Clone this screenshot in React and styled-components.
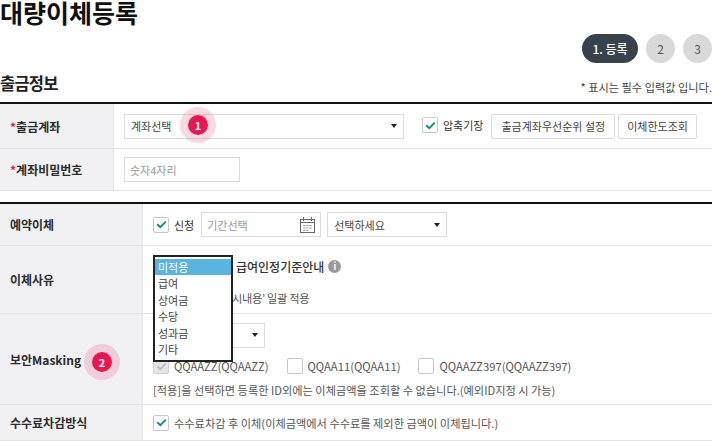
import React from "react";
import styled, { createGlobalStyle } from "styled-components";

const Global = createGlobalStyle`
  html, body { margin: 0; padding: 0; background: #fff; overflow: hidden; }
  body { font-family: "Noto Sans CJK KR", "Noto Sans", sans-serif; color: #333; font-size: 12px; }
  * { box-sizing: border-box; }
`;

const Page = styled.div`
  width: 712px;
  height: 441px;
  overflow: hidden;
  display: flex;
  flex-direction: column;
`;
const Title = styled.h1`
  margin: 0;
  height: 34px;
  font-size: 25px;
  line-height: 25px;
  font-weight: 700;
  color: #111;
`;
const Stepper = styled.div`
  height: 29px;
  display: flex;
  justify-content: flex-end;
  gap: 8px;
`;
const ActiveStep = styled.div`
  width: 56px;
  height: 29px;
  border-radius: 15px;
  background: #38424c;
  color: #fff;
  font-size: 12px;
  font-weight: 500;
  display: flex;
  align-items: center;
  justify-content: center;
`;
const Step = styled.div`
  width: 29px;
  height: 29px;
  border-radius: 50%;
  background: #d9d9d9;
  color: #555;
  font-size: 12px;
  display: flex;
  align-items: center;
  justify-content: center;
`;
const SectionHead = styled.div`
  height: 39px;
  display: flex;
  align-items: flex-start;
  justify-content: space-between;
  padding-top: 9px;
`;
const SectionTitle = styled.h2`
  margin: 0;
  font-size: 16.5px;
  line-height: 22px;
  font-weight: 700;
  color: #222;
  letter-spacing: -0.8px;
`;
const Note = styled.div`
  font-size: 11.2px;
  line-height: 22px;
  color: #444;
  margin-top: 4px;
`;
const Table = styled.div`
  border-top: 2px solid #111;
  margin-bottom: ${p => p.$mb || 0}px;
`;
const Row = styled.div`
  display: grid;
  grid-template-columns: ${p => p.$label}px 1fr;
  height: ${p => p.$h}px;
  border-bottom: 1px solid #e4e4e4;
`;
const Label = styled.div`
  background: #f1f1f4;
  border-right: 1px solid #e4e4e4;
  display: flex;
  align-items: center;
  padding-left: 10px;
  font-size: 12px;
  font-weight: 700;
  color: #2c2c2c;
  position: relative;
`;
const Star = styled.span`
  color: #e5174f;
`;
const Cell = styled.div`
  display: flex;
  align-items: center;
  padding-left: 10px;
  gap: ${p => p.$gap || 0}px;
  position: relative;
`;
const Stack = styled.div`
  display: flex;
  flex-direction: column;
  padding-left: 10px;
`;
const SelectBox = styled.div`
  width: ${p => p.$w}px;
  height: 25px;
  margin-left: ${p => p.$ml || 0}px;
  border: 1px solid #dcdcdc;
  display: flex;
  align-items: center;
  justify-content: space-between;
  padding: 0 6px;
  font-size: 11px;
  color: #444;
  background: #fff;
  flex: none;
`;
const Caret = styled.span`
  width: 0;
  height: 0;
  margin-left: auto;
  border-left: 3.5px solid transparent;
  border-right: 3.5px solid transparent;
  border-top: 4px solid #222;
`;
const TextBox = styled.div`
  width: ${p => p.$w}px;
  height: 25px;
  border: 1px solid #dcdcdc;
  display: flex;
  align-items: center;
  justify-content: space-between;
  padding: 0 4px 0 5px;
  font-size: 11px;
  color: #999;
  flex: none;
`;
const Box = styled.span`
  width: 16px;
  height: 16px;
  flex: none;
  margin-left: ${p => p.$ml || 0}px;
  margin-bottom: ${p => p.$up || 0}px;
  border: 1px solid ${p => (p.$muted ? "#d2d2d2" : "#c8c8c8")};
  border-radius: 2px;
  background: ${p => (p.$muted ? "#e6e6e6" : "#fff")};
  display: flex;
  align-items: center;
  justify-content: center;
`;
const CheckLabel = styled.span`
  font-size: 11px;
  color: #333;
  white-space: nowrap;
  margin: 0 ${p => p.$mr}px ${p => p.$up || 0}px 5px;
`;
const Btn = styled.div`
  height: 25px;
  margin-left: ${p => p.$ml || 0}px;
  padding: 0 ${p => p.$px || 8}px;
  border: 1px solid #dcdcdc;
  border-radius: 2px;
  font-size: 11px;
  color: #444;
  display: flex;
  align-items: center;
  white-space: nowrap;
  flex: none;
`;
const Badge = styled.span`
  position: absolute;
  left: ${p => p.$x}px;
  top: ${p => p.$y}px;
  width: 36px;
  height: 36px;
  border-radius: 50%;
  background: rgba(232, 30, 90, 0.17);
  display: flex;
  align-items: center;
  justify-content: center;
  &::after {
    content: "${p => p.$n}";
    width: 20px;
    height: 20px;
    border-radius: 50%;
    background: #ea1652;
    color: #fff;
    font-size: 11px;
    font-weight: 700;
    display: flex;
    align-items: center;
    justify-content: center;
  }
`;
const ListBox = styled.div`
  position: absolute;
  left: 153px;
  top: 255px;
  width: 80px;
  height: 107px;
  background: #fff;
  border: 2px solid #222;
  padding-top: 2px;
  z-index: 3;
`;
const ListItem = styled.div`
  height: ${p => (p.$on ? 16 : 16.6)}px;
  line-height: ${p => (p.$on ? 16 : 16.6)}px;
  padding-left: 3px;
  font-size: 11px;
  color: ${p => (p.$on ? "#fff" : "#444")};
  background: ${p => (p.$on ? "#5ab4e2" : "transparent")};
`;
const InfoIcon = styled.span`
  width: 13px;
  height: 13px;
  border-radius: 50%;
  background: #999;
  color: #fff;
  font-size: 9px;
  font-weight: 700;
  display: inline-flex;
  align-items: center;
  justify-content: center;
  margin-left: 4px;
`;
const Strong = styled.span`
  font-size: 12px;
  font-weight: 500;
  color: #333;
  white-space: nowrap;
`;
const Small = styled.div`
  font-size: ${p => p.$size || 11.2}px;
  letter-spacing: ${p => p.$ls || 0}px;
  color: #555;
  line-height: 16px;
  white-space: nowrap;
`;
const Line = styled.div`
  display: flex;
  align-items: center;
  height: ${p => p.$h}px;
  gap: ${p => p.$gap || 0}px;
  padding-left: ${p => p.$pl || 0}px;
  padding-top: ${p => p.$pt || 0}px;
`;
const Pair = styled.span`
  display: flex;
  align-items: center;
  gap: 5px;
`;

const Tick = ({ color = "#0f8f7f" }) => (
  <svg width="11" height="9" viewBox="0 0 11 9" fill="none">
    <path d="M1.2 4.2 L4.3 7.2 L9.8 1.6" stroke={color} strokeWidth="1.9" />
  </svg>
);
const Calendar = () => (
  <svg width="17" height="16" viewBox="0 0 17 16" fill="none" stroke="#666">
    <rect x="1.5" y="2.5" width="14" height="13" />
    <path d="M1.5 5.5h14M4.5 0v4M12.5 0v4" />
    <path d="M4.5 8.5h2M7.5 8.5h2M10.5 8.5h2M4.5 11h2M7.5 11h2M10.5 11h2M4.5 13.5h2M7.5 13.5h2" strokeDasharray="1.2 0.4" />
  </svg>
);

export default function App() {
  return (
    <Page>
      <Global />
      <Title>대량이체등록</Title>
      <Stepper>
        <ActiveStep>1. 등록</ActiveStep>
        <Step>2</Step>
        <Step>3</Step>
      </Stepper>
      <SectionHead>
        <SectionTitle>출금정보</SectionTitle>
        <Note>* 표시는 필수 입력값 입니다.</Note>
      </SectionHead>
      <Table $mb={11}>
        <Row $label={114} $h={45}>
          <Label><Star>*</Star>출금계좌</Label>
          <Cell>
            <SelectBox $w={280}>계좌선택<Caret /></SelectBox>
            <Box $ml={18} $up={2}><Tick /></Box>
            <CheckLabel $mr={8} $up={2}>압축기장</CheckLabel>
            <Btn $px={9}>출금계좌우선순위 설정</Btn>
            <Btn $ml={3}>이체한도조회</Btn>
            <Badge $x={66} $y={3} $n="1" />
          </Cell>
        </Row>
        <Row $label={114} $h={42}>
          <Label><Star>*</Star>계좌비밀번호</Label>
          <Cell><TextBox $w={116}>숫자4자리</TextBox></Cell>
        </Row>
      </Table>
      <Table>
        <Row $label={143} $h={42}>
          <Label>예약이체</Label>
          <Cell>
            <Box><Tick /></Box>
            <CheckLabel $mr={7}>신청</CheckLabel>
            <TextBox $w={120}>기간선택<Calendar /></TextBox>
            <SelectBox $w={120} $ml={6}>선택하세요<Caret /></SelectBox>
          </Cell>
        </Row>
        <Row $label={143} $h={68}>
          <Label>이체사유</Label>
          <Stack>
            <Line $h={33} $pl={83} $pt={7}>
              <Strong>급여인정기준안내</Strong><InfoIcon>i</InfoIcon>
            </Line>
            <Line $h={28} $pl={79} $pt={10}>
              <Small $ls={-0.3}>시내용’ 일괄 적용</Small>
            </Line>
          </Stack>
        </Row>
        <Row $label={143} $h={91}>
          <Label>보안Masking<Badge $x={84} $y={30} $n="2" /></Label>
          <Stack>
            <Line $h={34} $pt={8}>
              <SelectBox $w={112}><Caret /></SelectBox>
            </Line>
            <Line $h={31} $gap={18} $pt={5}>
              <Pair><Box $muted><Tick color="#bbb" /></Box><Small $size={11.25}>QQAAZZ(QQAAZZ)</Small></Pair>
              <Pair><Box /><Small $size={11.25}>QQAA11(QQAA11)</Small></Pair>
              <Pair><Box /><Small $size={11.25}>QQAAZZ397(QQAAZZ397)</Small></Pair>
            </Line>
            <Line $h={22}>
              <Small>[적용]을 선택하면 등록한 ID외에는 이체금액을 조회할 수 없습니다.(예외ID지정 시 가능)</Small>
            </Line>
          </Stack>
        </Row>
        <Row $label={143} $h={36}>
          <Label>수수료차감방식</Label>
          <Cell $gap={5}>
            <Box><Tick /></Box>
            <Small>수수료차감 후 이체(이체금액에서 수수료를 제외한 금액이 이체됩니다.)</Small>
          </Cell>
        </Row>
      </Table>
      <ListBox>
        <ListItem $on>미적용</ListItem>
        <ListItem>급여</ListItem>
        <ListItem>상여금</ListItem>
        <ListItem>수당</ListItem>
        <ListItem>성과금</ListItem>
        <ListItem>기타</ListItem>
      </ListBox>
    </Page>
  );
}
